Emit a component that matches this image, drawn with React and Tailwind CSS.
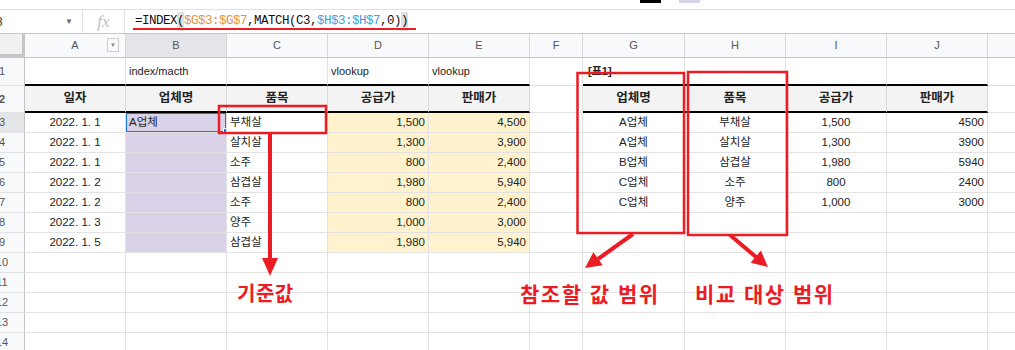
import React from 'react';

const RED = '#ec1c24';

const GRID =
  'grid grid-cols-[45px_101px_101px_101px_101px_101px_53px_102px_101px_101px_101px_100px]';

const letters = ['A', 'B', 'C', 'D', 'E', 'F', 'G', 'H', 'I', 'J', ''];

// alignment + fill per column A..K for data rows
const dataCls = [
  'justify-center',
  'justify-start pl-[3px] bg-[#d9d2e9]',
  'justify-start pl-[3px]',
  'justify-end pr-[3px] bg-[#fff2cc]',
  'justify-end pr-[3px] bg-[#fff2cc]',
  'justify-center',
  'justify-center',
  'justify-center',
  'justify-center',
  'justify-end pr-[3px]',
  'justify-center',
];

const rows = [
  ['2022. 1. 1', 'A업체', '부채살', '1,500', '4,500', '', 'A업체', '부채살', '1,500', '4500', ''],
  ['2022. 1. 1', '', '살치살', '1,300', '3,900', '', 'A업체', '살치살', '1,300', '3900', ''],
  ['2022. 1. 1', '', '소주', '800', '2,400', '', 'B업체', '삼겹살', '1,980', '5940', ''],
  ['2022. 1. 2', '', '삼겹살', '1,980', '5,940', '', 'C업체', '소주', '800', '2400', ''],
  ['2022. 1. 2', '', '소주', '800', '2,400', '', 'C업체', '양주', '1,000', '3000', ''],
  ['2022. 1. 3', '', '양주', '1,000', '3,000', '', '', '', '', '', ''],
  ['2022. 1. 5', '', '삼겹살', '1,980', '5,940', '', '', '', '', '', ''],
];

const headers = ['일자', '업체명', '품목', '공급가', '판매가', '', '업체명', '품목', '공급가', '판매가', ''];

function RowHead({ n, active }) {
  return (
    <div
      className={`flex items-center justify-center border-r border-b border-r-[#c4c4c4] border-b-[#e2e2e2] text-[11px] text-[#555] ${
        active ? 'bg-[#e3e5e8]' : 'bg-[#f8f9fa]'
      }`}
    >
      {n}
    </div>
  );
}

function Cell({ className = '', children }) {
  return (
    <div className={`flex items-center overflow-hidden whitespace-nowrap border-r border-[#e2e2e2] ${className}`}>
      {children}
    </div>
  );
}

function Annotations() {
  return (
    <svg className="pointer-events-none absolute inset-0" width="1015" height="350">
      <g fill="none" stroke={RED} strokeWidth="2.5">
        <rect x="219" y="106" width="107" height="27" />
        <rect x="577.5" y="73" width="106.5" height="160" />
        <rect x="688" y="72" width="99" height="163" />
      </g>
      <g stroke={RED} strokeWidth="4">
        <line x1="270" y1="133" x2="270" y2="260" />
        <line x1="633" y1="234" x2="598" y2="259" />
        <line x1="730" y1="235" x2="756" y2="257" />
      </g>
      <g fill={RED}>
        <polygon points="262,258 278,258 270,276" />
        <polygon points="602.7,265.3 593.4,252.2 585,268" />
        <polygon points="750.6,262.8 760.9,250.6 768,267" />
      </g>
    </svg>
  );
}

export default function App() {
  const font = "font-['Liberation_Sans','Noto_Sans_CJK_KR',sans-serif]";
  return (
    <div className={`relative h-[350px] w-[1015px] overflow-hidden bg-white text-[#222] ${font}`}>
      {/* toolbar remnant */}
      <div className="flex h-[10px] items-start border-b border-[#e0e0e0]">
        <div className="ml-[640px] h-[3px] w-[21px] bg-black" />
        <div className="ml-[18px] h-[3px] w-[21px] bg-[#d9d2e9]" />
      </div>

      {/* formula bar */}
      <div className="flex h-[24px] items-center border-b border-[#c8c8c8]">
        <div className="flex h-full w-[83px] items-center justify-between overflow-hidden border-r border-[#e2e2e2] pr-[9px]">
          <span className="-ml-[12px] text-[12px] text-[#333]">B3</span>
          <span className="text-[8px] text-[#666]">▼</span>
        </div>
        <div className="flex h-full w-[42px] items-center justify-center border-r border-[#e2e2e2] font-['Liberation_Serif',serif] text-[17px] italic text-[#c0c0c0]">
          fx
        </div>
        <div className="relative ml-[10px] flex h-full items-center font-['Liberation_Mono',monospace] text-[12.5px] tracking-[-0.5px] text-[#111]">
          <span>=INDEX</span>
          <span className="bg-[#e0e0e0]">(</span>
          <span className="text-[#e8913a]">$G$3:$G$7</span>
          <span>,MATCH(C3,</span>
          <span className="text-[#3d9ed8]">$H$3:$H$7</span>
          <span>,0)</span>
          <span className="bg-[#e0e0e0]">)</span>
          <div className="absolute -left-[2px] top-[18px] h-[2px] w-[283px] bg-[#ec1c24]" />
        </div>
      </div>

      <div className="-ml-[20px]">
        {/* column letters */}
        <div className={`${GRID} h-[24px] bg-[#f8f9fa] text-[11px] text-[#555]`}>
          <div className="border-r-[3px] border-b-[4px] border-[#c6c6c6] bg-[#f1f1f1]" />
          {letters.map((l, i) => (
            <div
              key={i}
              className={`relative flex items-center justify-center border-r border-b border-r-[#d6d6d6] border-b-[#c4c4c4] ${
                i === 1 ? 'bg-[#e3e5e8]' : ''
              }`}
            >
              {l}
              {i === 0 && (
                <div className="absolute right-[6px] top-[4px] flex h-[14px] w-[12px] items-center justify-center border border-[#cfcfcf] bg-[#f8f9fa] text-[6px] text-[#888]">
                  ▼
                </div>
              )}
            </div>
          ))}
        </div>

        {/* row 1 */}
        <div className={`${GRID} h-[28px] text-[11px]`}>
          <RowHead n={1} />
          {['', 'index/macth', '', 'vlookup', 'vlookup', '', '[표1]', '', '', '', ''].map((t, i) => (
            <Cell
              key={i}
              className={`pl-[3px] ${i === 6 ? 'pl-[5px] font-bold' : ''} ${
                i === 5 || i === 10 ? 'border-b border-b-[#e2e2e2]' : 'border-b-2 border-b-black'
              }`}
            >
              {t}
            </Cell>
          ))}
        </div>

        {/* row 2 headers */}
        <div className={`${GRID} h-[27px] text-[12.5px] font-bold`}>
          <RowHead n={2} />
          {headers.map((t, i) => (
            <Cell
              key={i}
              className={`justify-center ${
                i === 5 || i === 10
                  ? 'border-b border-b-[#e2e2e2]'
                  : 'border-b-2 border-b-black border-r-[#d8d8d8] bg-[#f3f3f3]'
              }`}
            >
              {t}
            </Cell>
          ))}
        </div>

        {/* data rows */}
        {rows.map((r, ri) => (
          <div key={ri} className={`${GRID} h-[20px] text-[11.5px]`}>
            <RowHead n={ri + 3} active={ri === 0} />
            {r.map((t, i) => (
              <Cell key={i} className={`relative border-b border-b-[#e2e2e2] ${dataCls[i]}`}>
                {t}
                {ri === 0 && i === 1 && (
                  <>
                    <div className="absolute -left-[1px] -top-[1px] h-[21px] w-[102px] border-2 border-[#1a73e8]" />
                    <div className="absolute -right-[3px] -bottom-[2px] h-[6px] w-[6px] border border-white bg-[#1a73e8]" />
                  </>
                )}
              </Cell>
            ))}
          </div>
        ))}

        {/* empty rows */}
        {[10, 11, 12, 13, 14].map((n) => (
          <div key={n} className={`${GRID} h-[20px]`}>
            <RowHead n={n} />
            {letters.map((_, i) => (
              <Cell key={i} className="border-b border-b-[#e2e2e2]" />
            ))}
          </div>
        ))}
      </div>

      <Annotations />

      <div className="absolute left-[237px] top-[284px] text-[20px] font-bold leading-none tracking-[0.5px] text-[#ec1c24]">
        기준값
      </div>
      <div className="absolute left-[520px] top-[284px] whitespace-nowrap text-[21px] font-bold leading-none tracking-[1.5px] text-[#ec1c24]">
        참조할 값 범위
      </div>
      <div className="absolute left-[695px] top-[284px] whitespace-nowrap text-[21px] font-bold leading-none tracking-[1.5px] text-[#ec1c24]">
        비교 대상 범위
      </div>
    </div>
  );
}
